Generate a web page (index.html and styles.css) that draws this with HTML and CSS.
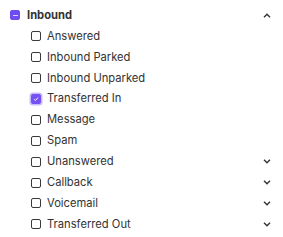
FILE: index.html
```html
<!DOCTYPE html>
<html>
<head>
<meta charset="utf-8">
<link rel="stylesheet" href="styles.css">
</head>
<body>
<div class="group">
  <div class="row head">
    <span class="box indet"><span class="dash"></span></span>
    <span class="label bold">Inbound</span>
    <svg class="chev" viewBox="0 0 8 5" width="8" height="5"><path d="M1 4.2 L4 1.2 L7 4.2" fill="none" stroke="#333" stroke-width="1.4"/></svg>
  </div>
  <div class="row sub"><span class="box"></span><span class="label">Answered</span></div>
  <div class="row sub"><span class="box"></span><span class="label">Inbound Parked</span></div>
  <div class="row sub"><span class="box"></span><span class="label">Inbound Unparked</span></div>
  <div class="row sub"><span class="box checked"><svg viewBox="0 0 10 10" width="10" height="10"><path d="M2.6 5.2 L4.3 6.9 L7.5 3.3" fill="none" stroke="#fff" stroke-width="1.2"/></svg></span><span class="label">Transferred In</span></div>
  <div class="row sub"><span class="box"></span><span class="label">Message</span></div>
  <div class="row sub"><span class="box"></span><span class="label">Spam</span></div>
  <div class="row sub"><span class="box"></span><span class="label">Unanswered</span><svg class="chev" viewBox="0 0 8 5" width="8" height="5"><path d="M1 0.8 L4 3.8 L7 0.8" fill="none" stroke="#333" stroke-width="1.4"/></svg></div>
  <div class="row sub"><span class="box"></span><span class="label">Callback</span><svg class="chev" viewBox="0 0 8 5" width="8" height="5"><path d="M1 0.8 L4 3.8 L7 0.8" fill="none" stroke="#333" stroke-width="1.4"/></svg></div>
  <div class="row sub"><span class="box"></span><span class="label">Voicemail</span><svg class="chev" viewBox="0 0 8 5" width="8" height="5"><path d="M1 0.8 L4 3.8 L7 0.8" fill="none" stroke="#333" stroke-width="1.4"/></svg></div>
  <div class="row sub"><span class="box"></span><span class="label">Transferred Out</span><svg class="chev" viewBox="0 0 8 5" width="8" height="5"><path d="M1 0.8 L4 3.8 L7 0.8" fill="none" stroke="#333" stroke-width="1.4"/></svg></div>
</div>
</body>
</html>
```
FILE: styles.css
```css
html, body {
  margin: 0;
  padding: 0;
  background: #fff;
}
body {
  font-family: Inter, "Noto Sans", sans-serif;
  font-size: 11.2px;
  color: #333;
}
.group {
  padding-top: 5px;
  display: flex;
  flex-direction: column;
}
.row {
  height: 20.9px;
  display: flex;
  align-items: center;
  padding-right: 12px;
}
.head {
  padding-left: 10px;
}
.sub {
  padding-left: 31px;
}
.box {
  width: 8px;
  height: 8px;
  border: 1px solid #3a3a3a;
  border-radius: 2px;
  flex: none;
  display: flex;
  align-items: center;
  justify-content: center;
  margin-right: 6px;
}
.head .box {
  margin-right: 7px;
}
.box.indet {
  background: #6d4cf0;
  border-color: #6d4cf0;
}
.dash {
  width: 5px;
  height: 1.3px;
  background: #d9d0ff;
}
.box.checked {
  background: #7452f3;
  border-color: #7452f3;
  box-shadow: 0 0 0 1.5px #c9bcfb;
}
.label {
  flex: 1;
  line-height: 1;
}
.bold {
  font-weight: 700;
}
.chev {
  flex: none;
}
```
